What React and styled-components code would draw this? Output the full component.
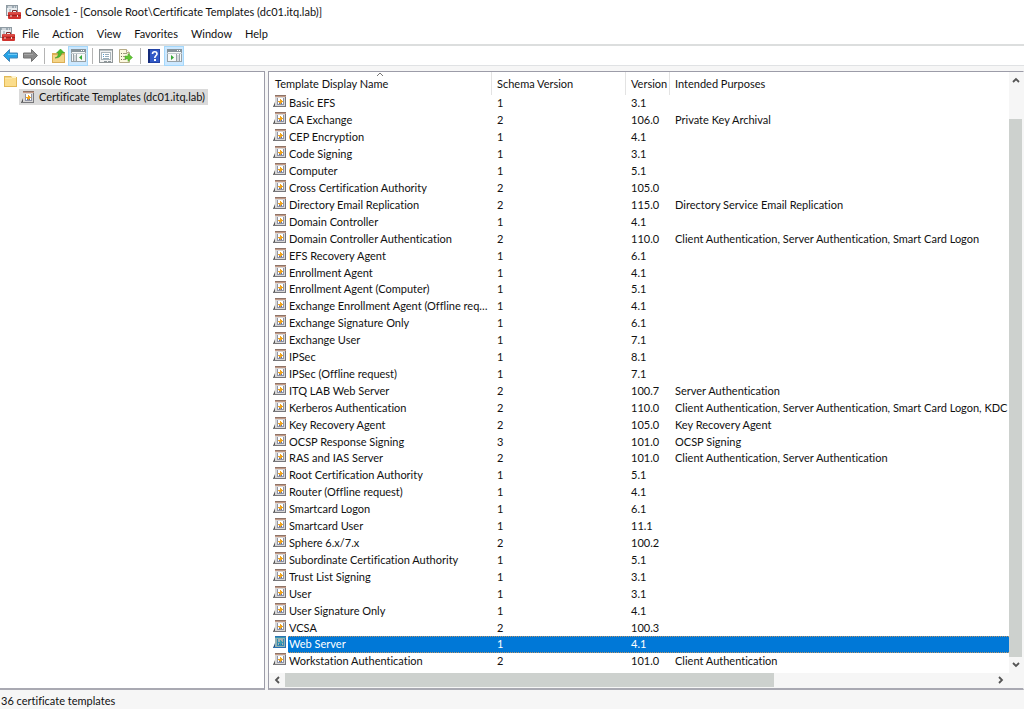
import React, { useState } from 'react';
import styled, { createGlobalStyle, css } from 'styled-components';

const GlobalStyle = createGlobalStyle`
  * {
    box-sizing: border-box;
  }
  body {
    margin: 0;
    overflow: hidden;
  }
  button {
    font: inherit;
    color: inherit;
    background: none;
    border: none;
    padding: 0;
    text-align: left;
  }
  svg {
    display: block;
    flex: none;
  }
`;

const Window = styled.div`
  height: 100vh;
  display: flex;
  flex-direction: column;
  background: #f6f6f6;
  color: #111;
  font-family: Lato, 'Open Sans', sans-serif;
  font-size: 11px;
  font-variant-ligatures: none;
  line-height: 16px;
  white-space: nowrap;
`;

const TitleBar = styled.header`
  display: flex;
  align-items: center;
  gap: 4px;
  height: 24px;
  padding-left: 6px;
  background: white;
`;

const Title = styled.h1`
  margin: 0;
  font-size: 11px;
  font-weight: 400;
`;

const MenuBar = styled.nav`
  display: flex;
  align-items: center;
  height: 22px;
  background: white;
  border-bottom: 2px solid #dcdede;
`;

const Menu = styled.div`
  display: flex;
  gap: 13px;
  padding-left: 7px;
`;

const MenuBtn = styled.button`
  height: 16px;
`;

const Toolbar = styled.div`
  display: flex;
  align-items: center;
  height: 20px;
  background: white;
  border-bottom: 1px solid #e0e2e4;
`;

const ToolBtn = styled.button`
  display: flex;
  align-items: center;
  justify-content: center;
  width: 20px;
  height: 20px;
  ${(p) =>
    p.$on &&
    css`
      background: #cce8ff;
      border: 1px solid #a5d8fb;
    `}
`;

const Separator = styled.span`
  width: 1px;
  height: 16px;
  margin: 0 3px 0 4px;
  background: #b4b4b4;
`;

const Main = styled.main`
  flex: 1;
  min-height: 0;
  display: flex;
  gap: 3px;
  padding-top: 5px;
`;

const Panel = styled.section`
  display: flex;
  flex-direction: column;
  min-width: 0;
  background: white;
  border: 1px solid #9c9ca8;
  border-bottom: 2px solid #a9a9b2;
`;

const TreePanel = styled(Panel)`
  width: 265px;
  border-left: none;
`;

const ListPanel = styled(Panel)`
  flex: 1;
  border-right: 1px solid #f6f6f6;
`;

const Tree = styled.ul`
  list-style: none;
  margin: 0;
  padding: 1px 0 0 4px;

  ul {
    padding: 0 0 0 15px;
  }
`;

const TreeItem = styled.button`
  display: flex;
  align-items: center;
  gap: 5px;
  height: 16px;
  padding-right: 3px;
  background: ${(p) => (p.$selected ? '#dadada' : 'none')};
  padding-left: ${(p) => (p.$selected ? '2px' : '0')};
`;

const Columns = styled.div`
  flex: 1;
  min-height: 0;
  display: flex;
`;

const TableArea = styled.div`
  flex: 1;
  min-width: 0;
  padding-bottom: 3px;
  overflow: hidden;
`;

const Table = styled.table`
  width: 100%;
  height: 100%;
  table-layout: fixed;
  border-collapse: separate;
  border-spacing: 0;
`;

const HeadCell = styled.th`
  position: relative;
  height: 23px;
  padding: 0 0 0 5px;
  font-weight: 400;
  text-align: left;
  border-right: ${(p) => (p.$last ? 'none' : '1px solid #e3e3e3')};

  &:first-child {
    padding-left: 6px;
  }
`;

const SortMark = styled.svg`
  position: absolute;
  top: 0;
  left: calc(50% - 4px);
`;

const Cell = styled.td`
  padding: 0 0 0 5px;
  line-height: 16px;
  overflow: hidden;
`;

const NameCell = styled.td`
  padding: 0 0 0 4px;
  line-height: 16px;
`;

const NameBox = styled.div`
  display: flex;
  align-items: flex-start;
  gap: 3px;
`;

const Name = styled.span`
  flex: 1;
  min-width: 0;
  overflow: hidden;
  text-overflow: ellipsis;
`;

const dots = 'repeating-linear-gradient(90deg, #b8946a 0 1px, #0078d7 1px 2px)';
const fill = 'linear-gradient(#0078d7, #0078d7)';

const Row = styled.tr`
  cursor: default;
  ${(p) =>
    p.$selected &&
    css`
      color: white;

      ${Cell} {
        background: ${dots} top / 100% 1px no-repeat, ${dots} bottom / 100% 1px no-repeat, #0078d7;
      }
      /* the icon stays outside the highlight */
      ${NameCell} {
        background: ${dots} right top / calc(100% - 19px) 1px no-repeat,
          ${dots} right bottom / calc(100% - 19px) 1px no-repeat,
          ${fill} right / calc(100% - 19px) 100% no-repeat;
      }
      svg {
        filter: sepia(1) hue-rotate(170deg) saturate(4) brightness(0.7);
      }
    `}
`;

const VScroll = styled.div`
  display: flex;
  flex-direction: column;
  width: 14px;
  background: #f6f6f6;
`;

const HScroll = styled.div`
  display: flex;
  height: 15px;
  padding-right: 14px;
  background: #f6f6f6;
`;

const ScrollBtn = styled.button`
  display: flex;
  align-items: center;
  justify-content: center;
  flex: none;
  width: ${(p) => (p.$wide ? '16px' : '14px')};
  height: ${(p) => (p.$wide ? '14px' : '16px')};
`;

const Track = styled.div`
  flex: 1;
  display: flex;
  flex-direction: ${(p) => (p.$vertical ? 'column' : 'row')};
  justify-content: ${(p) => (p.$vertical ? 'flex-end' : 'flex-start')};
`;

const Thumb = styled.div`
  width: ${(p) => p.$width || '13px'};
  height: ${(p) => p.$height || '14px'};
  background: #cdd1ce;
`;

const StatusBar = styled.footer`
  height: 19px;
  padding: 3px 1px 0;
`;

const ToolboxIcon = () => (
  <svg width="15" height="15" viewBox="0 0 15 15">
    <rect x="0.5" y="0.5" width="11" height="10" fill="#e8edf0" stroke="#8f9ba3" />
    <rect x="1" y="1" width="10" height="2" fill="#9caab4" />
    <path d="M2 2h4M8 2h1M10 2h1" stroke="#fff" />
    <path d="M3 5h2M3 7h2" stroke="#8f9ba3" />
    <path d="M6.5 7V5.5h4V7" fill="none" stroke="#7d2a28" />
    <rect x="2" y="7" width="13" height="7" rx="1" fill="#d0332e" />
    <path d="M3 8h11" stroke="#e4645c" />
    <path d="M2 10.500h13" stroke="#a02320" />
    <path d="M5 10v2M11.500 10v2" stroke="#f3d9d5" />
  </svg>
);

const TemplateIcon = () => (
  <svg width="13" height="13" viewBox="0 0 13 13">
    <path d="M0 12L2 7v5z" fill="#555" />
    <path d="M2 0h11v12H2z" fill="#d8d7d6" />
    <path d="M2 0.500h11" stroke="#8f7468" />
    <path d="M2 1.500h11" stroke="#c39a86" />
    <path d="M12.500 2v10M1 11.500h12" stroke="#77777b" />
    <path d="M4 3h7v6H4z" fill="#fff" />
    <path d="M4.500 3v6M10.500 3v6M4 9.500h7" stroke="#8f93a5" />
    <path d="M7 4h1v1h1v1h1v1H9v1H8v1H7V8H6V7H5V6h2z" fill="#efa41f" />
    <path d="M6 8h1v1H6zM8 8h1v1H8z" fill="#4f6cb8" />
  </svg>
);

const FolderIcon = () => (
  <svg width="13" height="12" viewBox="0 0 13 12">
    <path d="M0 1h7l1 1h5v10H0z" fill="#e3b956" />
    <path d="M1 3h11v8H1z" fill="#fbdd8c" />
    <path d="M8 1h4v2H8z" fill="#fff4cf" />
    <path d="M1 3h7l1-1" fill="none" stroke="#fff0bc" />
  </svg>
);

const ArrowIcon = ({ forward }) => (
  <svg width="15" height="13" viewBox="0 0 15 13">
    <path
      d={forward ? 'M14.500 6.500L8.500 0.500v3.500h-8v5h8v3.500z' : 'M0.500 6.500L6.500 0.500v3.500h8v5h-8v3.500z'}
      fill={forward ? '#8b8b8b' : '#27a3e6'}
      stroke={forward ? '#737373' : '#4687b8'}
    />
    <path d={forward ? 'M1 5.500h9' : 'M5 5.500h9'} stroke={forward ? '#a7a7a7' : '#6ccaf7'} />
  </svg>
);

const UpFolderIcon = () => (
  <svg width="13" height="14" viewBox="0 0 13 14">
    <path d="M0 4h5l1-1h7v11H0z" fill="#dbae55" />
    <path d="M1 6h11v7H1z" fill="#f4d487" />
    <path d="M3 9C5 8.500 6.500 6.500 6.500 4H4.500L8.500 0l4 4H9.500c0 3-2.500 5-6.500 5z" fill="#49bd2d" stroke="#36902a" strokeWidth="0.500" />
  </svg>
);

const PaneIcon = ({ right }) => (
  <svg width="15" height="13" viewBox="0 0 15 13">
    <rect x="0.500" y="0.500" width="14" height="12" fill="#f7f8f8" stroke="#98a2a7" />
    <path d="M0 1.500h15" stroke="#87939a" strokeWidth="3" />
    <path d="M10 1.500h1M12 1.500h1" stroke="#fff" />
    <path d="M0 4.500h15" stroke="#c3cbd0" />
    {right ? (
      <>
        <path d="M9.500 5v8M12.500 5v8" stroke="#98a2a7" />
        <path d="M10 7h2M10 9h2M10 11h2" stroke="#b5bec3" />
        <path d="M4 6v5l3-2.500z" fill="#35a935" />
      </>
    ) : (
      <>
        <path d="M2.500 5v8M5.500 5v8" stroke="#98a2a7" />
        <path d="M3 7h2M3 9h2M3 11h2" stroke="#b5bec3" />
        <path d="M11 6v5L8 8.500z" fill="#35a935" />
      </>
    )}
  </svg>
);

const PropertiesIcon = () => (
  <svg width="14" height="14" viewBox="0 0 14 14">
    <rect x="0.500" y="0.500" width="13" height="13" fill="#f1f2f2" stroke="#919799" />
    <path d="M1 1.500h12" stroke="#b9c0c3" />
    <rect x="2.500" y="3.500" width="9" height="7" fill="#fff" stroke="#a9b4ba" />
    <path d="M4 5.500h1M4 7.500h1" stroke="#4d9bd3" />
    <path d="M6 5.500h4M6 7.500h4M4 9.500h6" stroke="#97aebc" />
    <path d="M5 12.500h3M9 12.500h3" stroke="#8b9499" />
  </svg>
);

const ExportIcon = () => (
  <svg width="14" height="14" viewBox="0 0 14 14">
    <path d="M0.500 0.500h7l3 3v10h-10z" fill="#fcf8df" stroke="#b5ab87" />
    <path d="M7.500 0.500v3h3" fill="#fff" stroke="#b5ab87" />
    <path d="M2 4.500h1M2 7.500h1M2 10.500h1" stroke="#75715f" />
    <path d="M4 4.500h4M4 7.500h3M4 10.500h3" stroke="#a39d84" />
    <path d="M6 7h3V4.500L13.500 8.500 9 12.500V10H6z" fill="#62c534" stroke="#45a024" strokeWidth="0.500" />
  </svg>
);

const HelpIcon = () => (
  <svg width="12" height="14" viewBox="0 0 12 14">
    <rect width="12" height="14" fill="#2343a6" />
    <path d="M1 0v14" stroke="#142b7b" strokeWidth="2" />
    <rect x="2" y="1" width="9" height="12" fill="#3159c6" />
    <path d="M4.500 5C4.500 2 9 2 9 5c0 1.500-2.200 1.700-2.200 4" fill="none" stroke="#fff" strokeWidth="1.600" />
    <rect x="6" y="10" width="2" height="2" fill="#fff" />
  </svg>
);

const CHEVRONS = {
  up: 'M1 6l3-3 3 3',
  down: 'M1 2l3 3 3-3',
  left: 'M6 1L3 4l3 3',
  right: 'M2 1l3 3-3 3',
};

const Chevron = ({ dir }) => (
  <svg width="8" height="8" viewBox="0 0 8 8">
    <path d={CHEVRONS[dir]} fill="none" stroke="#555" strokeWidth="1.800" />
  </svg>
);

const MENU = ['File', 'Action', 'View', 'Favorites', 'Window', 'Help'];

const TEMPLATES = [
  ['Basic EFS', '1', '3.1', ''],
  ['CA Exchange', '2', '106.0', 'Private Key Archival'],
  ['CEP Encryption', '1', '4.1', ''],
  ['Code Signing', '1', '3.1', ''],
  ['Computer', '1', '5.1', ''],
  ['Cross Certification Authority', '2', '105.0', ''],
  ['Directory Email Replication', '2', '115.0', 'Directory Service Email Replication'],
  ['Domain Controller', '1', '4.1', ''],
  ['Domain Controller Authentication', '2', '110.0', 'Client Authentication, Server Authentication, Smart Card Logon'],
  ['EFS Recovery Agent', '1', '6.1', ''],
  ['Enrollment Agent', '1', '4.1', ''],
  ['Enrollment Agent (Computer)', '1', '5.1', ''],
  ['Exchange Enrollment Agent (Offline request)', '1', '4.1', ''],
  ['Exchange Signature Only', '1', '6.1', ''],
  ['Exchange User', '1', '7.1', ''],
  ['IPSec', '1', '8.1', ''],
  ['IPSec (Offline request)', '1', '7.1', ''],
  ['ITQ LAB Web Server', '2', '100.7', 'Server Authentication'],
  ['Kerberos Authentication', '2', '110.0', 'Client Authentication, Server Authentication, Smart Card Logon, KDC Authentication'],
  ['Key Recovery Agent', '2', '105.0', 'Key Recovery Agent'],
  ['OCSP Response Signing', '3', '101.0', 'OCSP Signing'],
  ['RAS and IAS Server', '2', '101.0', 'Client Authentication, Server Authentication'],
  ['Root Certification Authority', '1', '5.1', ''],
  ['Router (Offline request)', '1', '4.1', ''],
  ['Smartcard Logon', '1', '6.1', ''],
  ['Smartcard User', '1', '11.1', ''],
  ['Sphere 6.x/7.x', '2', '100.2', ''],
  ['Subordinate Certification Authority', '1', '5.1', ''],
  ['Trust List Signing', '1', '3.1', ''],
  ['User', '1', '3.1', ''],
  ['User Signature Only', '1', '4.1', ''],
  ['VCSA', '2', '100.3', ''],
  ['Web Server', '1', '4.1', ''],
  ['Workstation Authentication', '2', '101.0', 'Client Authentication'],
];

export default function App() {
  const [selected, setSelected] = useState('Web Server');

  return (
    <>
      <GlobalStyle />
      <Window>
        <TitleBar>
          <ToolboxIcon />
          <Title>Console1 - [Console Root\Certificate Templates (dc01.itq.lab)]</Title>
        </TitleBar>

        <MenuBar>
          <ToolboxIcon />
          <Menu>
            {MENU.map((item) => (
              <MenuBtn key={item}>{item}</MenuBtn>
            ))}
          </Menu>
        </MenuBar>

        <Toolbar>
          <ToolBtn aria-label="Back"><ArrowIcon /></ToolBtn>
          <ToolBtn aria-label="Forward"><ArrowIcon forward /></ToolBtn>
          <Separator />
          <ToolBtn aria-label="Up one level"><UpFolderIcon /></ToolBtn>
          <ToolBtn aria-label="Show or hide console tree" $on><PaneIcon /></ToolBtn>
          <Separator />
          <ToolBtn aria-label="Properties"><PropertiesIcon /></ToolBtn>
          <ToolBtn aria-label="Export list"><ExportIcon /></ToolBtn>
          <Separator />
          <ToolBtn aria-label="Help"><HelpIcon /></ToolBtn>
          <ToolBtn aria-label="Show or hide action pane" $on><PaneIcon right /></ToolBtn>
        </Toolbar>

        <Main>
          <TreePanel>
            <Tree>
              <li>
                <TreeItem>
                  <FolderIcon />
                  Console Root
                </TreeItem>
                <Tree as="ul">
                  <li>
                    <TreeItem $selected>
                      <TemplateIcon />
                      Certificate Templates (dc01.itq.lab)
                    </TreeItem>
                  </li>
                </Tree>
              </li>
            </Tree>
          </TreePanel>

          <ListPanel>
            <Columns>
              <TableArea>
                <Table>
                  <colgroup>
                    <col style={{ width: 223 }} />
                    <col style={{ width: 134 }} />
                    <col style={{ width: 44 }} />
                    <col />
                  </colgroup>
                  <thead>
                    <tr>
                      <HeadCell>
                        <button>Template Display Name</button>
                        <SortMark width="8" height="5" viewBox="0 0 8 5">
                          <path d="M1 4l3-3 3 3" fill="none" stroke="#777" />
                        </SortMark>
                      </HeadCell>
                      <HeadCell><button>Schema Version</button></HeadCell>
                      <HeadCell><button>Version</button></HeadCell>
                      <HeadCell $last><button>Intended Purposes</button></HeadCell>
                    </tr>
                  </thead>
                  <tbody>
                    {TEMPLATES.map(([name, schema, version, purposes]) => (
                      <Row key={name} $selected={name === selected} onClick={() => setSelected(name)}>
                        <NameCell>
                          <NameBox>
                            <TemplateIcon />
                            <Name>{name}</Name>
                          </NameBox>
                        </NameCell>
                        <Cell>{schema}</Cell>
                        <Cell>{version}</Cell>
                        <Cell>{purposes}</Cell>
                      </Row>
                    ))}
                  </tbody>
                </Table>
              </TableArea>
              <VScroll>
                <ScrollBtn aria-label="Scroll up"><Chevron dir="up" /></ScrollBtn>
                <Track $vertical>
                  <Thumb $height="94.5%" />
                </Track>
                <ScrollBtn aria-label="Scroll down"><Chevron dir="down" /></ScrollBtn>
              </VScroll>
            </Columns>
            <HScroll>
              <ScrollBtn $wide aria-label="Scroll left"><Chevron dir="left" /></ScrollBtn>
              <Track>
                <Thumb $width="69%" />
              </Track>
              <ScrollBtn $wide aria-label="Scroll right"><Chevron dir="right" /></ScrollBtn>
            </HScroll>
          </ListPanel>
        </Main>

        <StatusBar>36 certificate templates</StatusBar>
      </Window>
    </>
  );
}
